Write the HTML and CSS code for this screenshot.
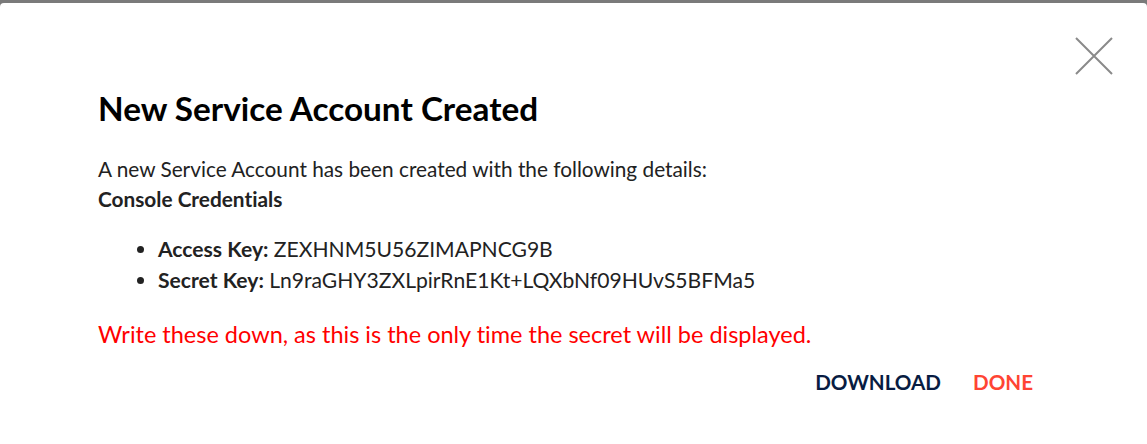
FILE: index.html
```html
<!DOCTYPE html>
<html>
<head>
<meta charset="utf-8">
<link rel="stylesheet" href="styles.css">
</head>
<body>
<div class="backdrop">
  <div class="modal">
    <button class="close" aria-label="Close">
      <svg width="38" height="38" viewBox="0 0 38 38"><path d="M1 1 L37 37 M37 1 L1 37" stroke="#8a8a8a" stroke-width="2" fill="none"/></svg>
    </button>
    <h2 class="title">New Service Account Created</h2>
    <div class="body">
      <p class="intro">A new Service Account has been created with the following details:</p>
      <p class="label">Console Credentials</p>
      <ul class="keys">
        <li><b>Access Key:</b> ZEXHNM5U56ZIMAPNCG9B</li>
        <li><b>Secret Key:</b> Ln9raGHY3ZXLpirRnE1Kt+LQXbNf09HUvS5BFMa5</li>
      </ul>
      <p class="warn">Write these down, as this is the only time the secret will be displayed.</p>
    </div>
    <div class="actions">
      <button class="btn btn-download">DOWNLOAD</button>
      <button class="btn btn-done">DONE</button>
    </div>
  </div>
</div>
</body>
</html>
```
FILE: styles.css
```css
html, body { margin: 0; padding: 0; }
body {
  background: #7a7a7a;
  font-family: Lato, "Open Sans", sans-serif;
  font-variant-ligatures: none;
  width: 1147px;
  height: 444px;
  overflow: hidden;
}
.backdrop {
  padding-top: 3px;
}
.modal {
  position: relative;
  background: #fff;
  border-radius: 4px;
  height: 445px;
  box-sizing: border-box;
  padding: 0 98px;
}
.close {
  position: absolute;
  top: 34px;
  right: 34px;
  border: 0;
  background: none;
  padding: 0;
  cursor: pointer;
}
.close svg { display: block; }
.title {
  margin: 0;
  padding-top: 85px;
  font-size: 33.3px;
  font-weight: 700;
  color: #000;
  line-height: 40px;
}
.body {
  margin-top: 26px;
  font-size: 20.8px;
  color: #222;
  line-height: 30px;
}
.body p { margin: 0; }
.label { font-weight: 700; }
.keys {
  margin: 18.5px 0 0;
  padding-left: 60px;
  line-height: 31px;
  font-size: 21.1px;
}
.keys b { font-weight: 700; }
.warn {
  margin-top: 23px !important;
  color: #ff0000;
  font-size: 23.5px;
  line-height: 32px;
}
.actions {
  display: flex;
  justify-content: flex-end;
  margin-top: 14px;
}
.btn {
  border: 0;
  background: none;
  font-family: Lato, sans-serif;
  font-size: 20.6px;
  font-weight: 700;
  line-height: 24px;
  padding: 6px 16px;
  cursor: pointer;
}
.btn-download { color: #081c42; }
.btn-done { color: #ff4433; }
```
